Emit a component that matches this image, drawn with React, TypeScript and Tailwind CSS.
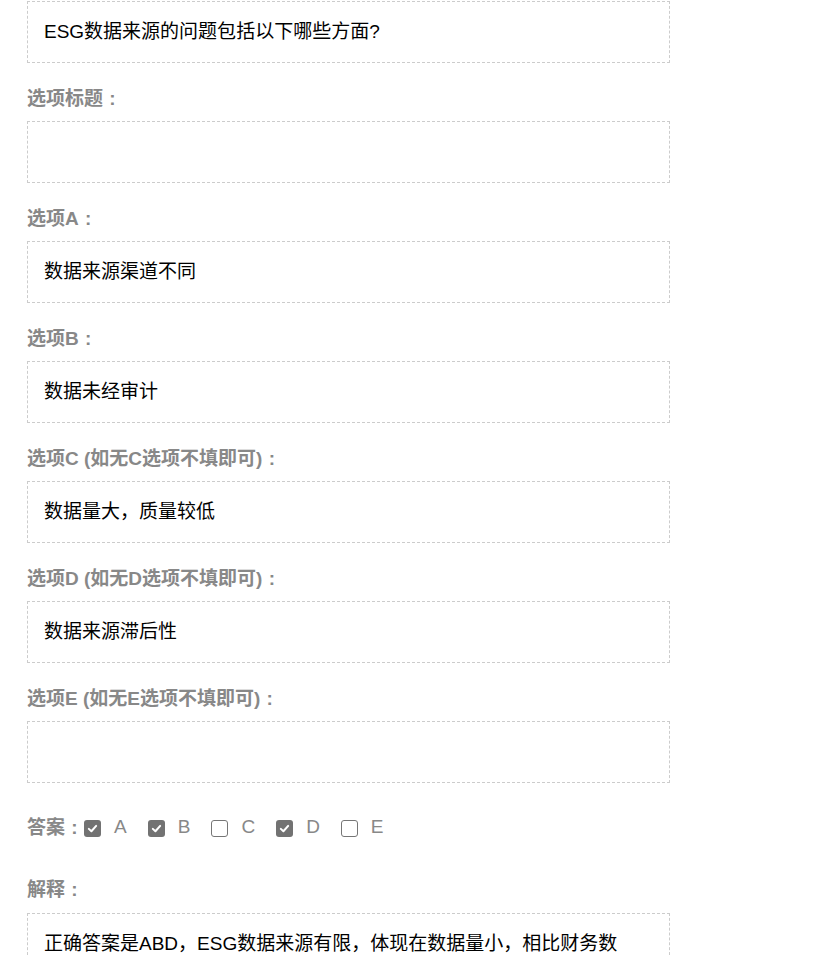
import React from "react";

const font = { fontFamily: '"Liberation Sans", "Noto Sans CJK SC", sans-serif' };

type Field = { label: string; value: string };

const fields: Field[] = [
  { label: "选项标题", value: "" },
  { label: "选项A", value: "数据来源渠道不同" },
  { label: "选项B", value: "数据未经审计" },
  { label: "选项C (如无C选项不填即可)", value: "数据量大，质量较低" },
  { label: "选项D (如无D选项不填即可)", value: "数据来源滞后性" },
  { label: "选项E (如无E选项不填即可)", value: "" },
];

const answers = [
  { key: "A", checked: true },
  { key: "B", checked: true },
  { key: "C", checked: false },
  { key: "D", checked: true },
  { key: "E", checked: false },
];

function Box({ children }: { children?: React.ReactNode }) {
  return (
    <div className="w-[643px] min-h-[62px] border border-dashed border-[#cccccc] px-4 py-[18px] text-[19px] leading-6 text-black">
      {children}
    </div>
  );
}

// 冒号居中占一个全角宽度
function Label({ children, className = "" }: { children: React.ReactNode; className?: string }) {
  return (
    <div className={"flex text-[19px] leading-6 font-bold text-[#888888] " + className}>
      <span>{children}</span>
      <span className="inline-block w-[19px] text-center">:</span>
    </div>
  );
}

function Check({ checked }: { checked: boolean }) {
  return checked ? (
    <span className="flex h-[17px] w-[17px] items-center justify-center rounded-[3px] bg-[#727272]">
      <svg width="11" height="11" viewBox="0 0 12 12">
        <path d="M2 6.4 L4.8 9 L10 3.2" fill="none" stroke="#fff" strokeWidth="2.2" strokeLinecap="round" strokeLinejoin="round" />
      </svg>
    </span>
  ) : (
    <span className="h-[17px] w-[17px] rounded-[3px] border border-[#767676] bg-white" />
  );
}

export default function App() {
  return (
    <div className="min-h-screen bg-white pl-[27px] pt-px" style={font}>
      <Box>ESG数据来源的问题包括以下哪些方面?</Box>

      {fields.map((f) => (
        <div key={f.label}>
          <Label className="mt-6 mb-[10px]">{f.label}</Label>
          <Box>{f.value}</Box>
        </div>
      ))}

      {/* 答案 */}
      <div className="mt-[33px] flex h-6 items-center">
        <Label>答案</Label>
        <div className="flex items-center">
          {answers.map((a) => (
            <div key={a.key} className="mr-[21px] flex items-center">
              <Check checked={a.checked} />
              <span className="mb-[3px] ml-[13px] text-[19px] leading-6 text-[#888888]">{a.key}</span>
            </div>
          ))}
        </div>
      </div>

      <Label className="mt-[38px] mb-[11px]">解释</Label>
      <Box>
        正确答案是ABD，ESG数据来源有限，体现在数据量小，相比财务数据，ESG数据大多未经审计，且存在滞后性。
      </Box>
    </div>
  );
}
